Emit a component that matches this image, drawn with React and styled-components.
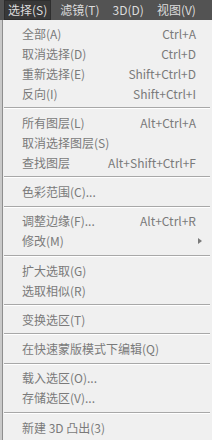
import styled, { createGlobalStyle } from 'styled-components'

const Global = createGlobalStyle`
  html, body {
    margin: 0;
    padding: 0;
    background: #c9c9c9;
    overflow: hidden;
  }
  body {
    font-family: "Noto Sans CJK SC", "Noto Sans", sans-serif;
    font-size: 12px;
  }
`

const Page = styled.div`
  width: 212px;
  height: 440px;
  display: flex;
  flex-direction: column;
  overflow: hidden;
`

const MenuBar = styled.div`
  height: 20px;
  background: #535353;
  display: flex;
  align-items: stretch;
  gap: 5px;
  padding-left: 4px;
  flex-shrink: 0;
  white-space: nowrap;
`

const BarItem = styled.div`
  display: flex;
  align-items: center;
  flex-shrink: 0;
  padding: 0 4px;
  color: #dcdcdc;
  line-height: 1;
  background: ${p => (p.$active ? '#383838' : 'transparent')};
  box-shadow: ${p => (p.$active ? 'inset 0 0 0 1px #2e2e2e' : 'none')};
`

const Dropdown = styled.div`
  flex: 1;
  margin-left: 2px;
  background: #f0f0f0;
  border-left: 1px solid #8e8e8e;
  padding-top: 3px;
`

const Row = styled.div`
  height: 20px;
  display: flex;
  align-items: center;
  padding: 0 16px 0 19px;
  color: #7a7a7a;
  white-space: nowrap;
`

const Label = styled.span`
  flex: 1;
`

const Shortcut = styled.span`
  text-align: right;
`

const Arrow = styled.span`
  width: 0;
  height: 0;
  border-top: 3px solid transparent;
  border-bottom: 3px solid transparent;
  border-left: 4px solid #7a7a7a;
  margin-right: -6px;
`

const Separator = styled.div`
  margin: 4px 2px 3.25px 1px;
  height: 1px;
  background: #a8a8a8;
  border-bottom: 1px solid #ffffff;
`

const groups = [
  [
    ['全部(A)', 'Ctrl+A'],
    ['取消选择(D)', 'Ctrl+D'],
    ['重新选择(E)', 'Shift+Ctrl+D'],
    ['反向(I)', 'Shift+Ctrl+I'],
  ],
  [
    ['所有图层(L)', 'Alt+Ctrl+A'],
    ['取消选择图层(S)'],
    ['查找图层', 'Alt+Shift+Ctrl+F'],
  ],
  [['色彩范围(C)...']],
  [
    ['调整边缘(F)...', 'Alt+Ctrl+R'],
    ['修改(M)', null, true],
  ],
  [['扩大选取(G)'], ['选取相似(R)']],
  [['变换选区(T)']],
  [['在快速蒙版模式下编辑(Q)']],
  [['载入选区(O)...'], ['存储选区(V)...']],
  [['新建 3D 凸出(3)']],
]

export default function App() {
  return (
    <Page>
      <Global />
      <MenuBar>
        <BarItem $active>选择(S)</BarItem>
        <BarItem>滤镜(T)</BarItem>
        <BarItem>3D(D)</BarItem>
        <BarItem>视图(V)</BarItem>
      </MenuBar>
      <Dropdown>
        {groups.map((group, gi) => (
          <div key={gi}>
            {gi > 0 && <Separator />}
            {group.map(([label, shortcut, sub]) => (
              <Row key={label}>
                <Label>{label}</Label>
                {shortcut && <Shortcut>{shortcut}</Shortcut>}
                {sub && <Arrow />}
              </Row>
            ))}
          </div>
        ))}
      </Dropdown>
    </Page>
  )
}
